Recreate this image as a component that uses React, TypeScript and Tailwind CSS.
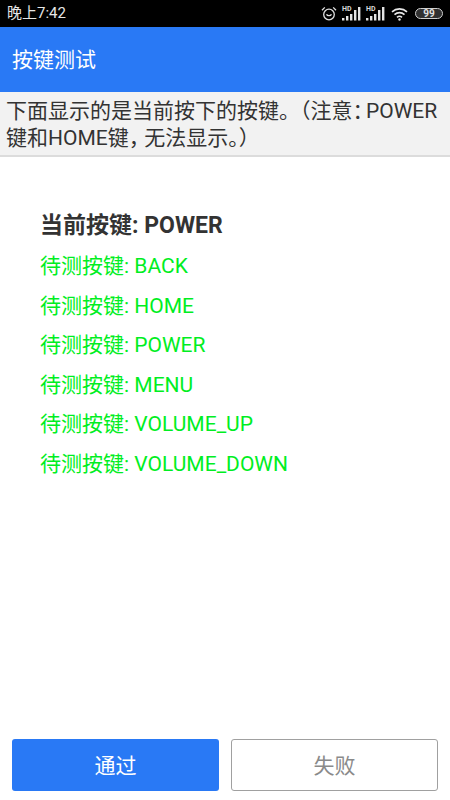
const font = { fontFamily: 'Roboto, "Noto Sans CJK SC", sans-serif' };

const keys = ["BACK", "HOME", "POWER", "MENU", "VOLUME_UP", "VOLUME_DOWN"];

const Alarm = () => (
  <svg viewBox="0 0 16 15" className="w-[16px] h-[15px]" fill="none" stroke="#e0e0e0" strokeWidth="1.300">
    <circle cx="8" cy="8.500" r="5.300" />
    <path d="M5.600 8.200c.6 1.900 4.200 1.900 4.800 0" />
    <path d="M1 4.200 3.800 1.400M15 4.200 12.200 1.400" />
  </svg>
);

const Signal = () => (
  <span className="relative block w-[19px] h-[15px]">
    <span className="absolute left-0 top-0 text-[7px] leading-[7px] font-bold text-[#d8d8d8]">HD</span>
    <svg viewBox="0 0 19 15" className="absolute inset-0 w-[19px] h-[15px]" fill="#e4e4e4">
      <rect x="0" y="12" width="2.400" height="2.500" />
      <rect x="4" y="10" width="2.400" height="4.500" />
      <rect x="8" y="8" width="2.400" height="6.500" />
      <rect x="12" y="4" width="2.400" height="10.500" />
      <rect x="16" y="1" width="2.400" height="13.500" />
    </svg>
  </span>
);

const App = () => {
  return (
    <div className="w-[450px] h-[800px] flex flex-col bg-white overflow-hidden" style={font}>
      {/* status bar */}
      <div className="h-[27px] bg-black flex items-center justify-between pl-[7px] pr-[7px] text-[#e6e6e6]">
        <span className="text-[15px] leading-none">晚上7:42</span>
        <div className="flex items-center">
          <Alarm />
          <span className="w-[5px]" />
          <Signal />
          <span className="w-[5px]" />
          <Signal />
          <span className="w-[6px]" />
          <svg viewBox="0 0 17 14" className="w-[17px] h-[14px]" fill="none" stroke="#e8e8e8" strokeWidth="1.600">
            <path d="M1 4.800c4.300-3.900 10.700-3.900 15 0" />
            <path d="M3.500 7.600c2.900-2.600 7.100-2.600 10 0" />
            <path d="M6 10.300c1.500-1.300 3.500-1.300 5 0" />
            <circle cx="8.500" cy="12.500" r="1.200" fill="#e8e8e8" stroke="none" />
          </svg>
          <span className="w-[7px]" />
          <span className="w-[28px] h-[11px] rounded-full bg-[#303030] border border-[#cfcfcf] text-[#e0e0e0] text-[10px] leading-[9px] font-bold text-center">99</span>
        </div>
      </div>

      {/* title bar */}
      <div className="h-[65px] bg-[#2979f5] flex items-center px-3 pt-[2px] text-white text-[21px]">按键测试</div>

      {/* notice */}
      <div className="h-[65px] bg-[#f2f2f2] border-b-2 border-[#dcdcdc] px-[6px] pt-[6px] text-[21px] leading-[27px] text-[#333333] whitespace-nowrap">
        <div>
          下面显示的是当前按下的按键。<span className="[font-feature-settings:'halt']">（</span>注意<span className="[font-feature-settings:'halt']">：</span><span className="ml-[3px]">POWER</span>
        </div>
        <div>
          键和HOME键<span className="mr-[5px] [font-feature-settings:'halt']">，</span>无法显示。<span className="[font-feature-settings:'halt']">）</span>
        </div>
      </div>

      {/* key list */}
      <div className="flex-1 pl-[40px] pt-[54px]">
        <div className="text-[23px] leading-[30px] font-bold text-[#333333] mb-[12px]">当前按键: POWER</div>
        <div className="flex flex-col gap-[13.500px]">
          {keys.map((k) => (
            <div key={k} className="text-[21px] leading-[26px] text-[#00ee22]">待测按键: {k}</div>
          ))}
        </div>
      </div>

      {/* buttons */}
      <div className="flex gap-3 px-3 pb-[9px]">
        <button className="w-[207px] h-[52px] pt-[3px] rounded-[3px] bg-[#2979f5] text-white text-[21px]">通过</button>
        <button className="w-[207px] h-[52px] pt-[3px] rounded-[3px] bg-white border border-[#a0a0a0] text-[#8a8a8a] text-[21px]">失败</button>
      </div>
    </div>
  );
};

export default App;
